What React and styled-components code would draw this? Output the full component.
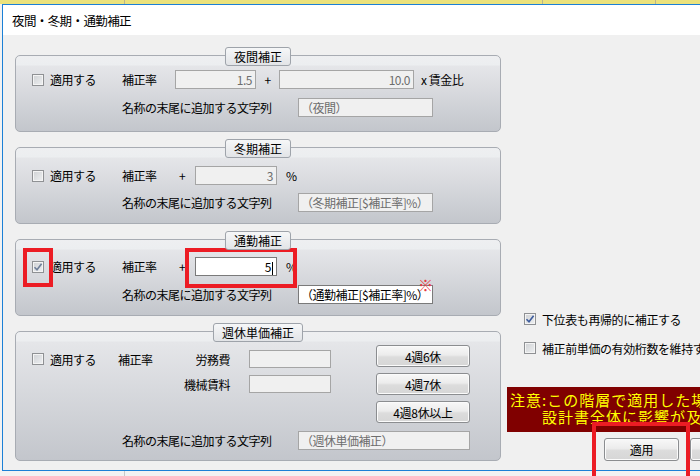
import React from 'react';
import styled, { createGlobalStyle } from 'styled-components';

const GlobalStyle = createGlobalStyle`
  body {
    margin: 0;
    font-family: "Noto Sans CJK JP", "Noto Sans", sans-serif;
    font-size: 12px;
    color: #000;
  }
`;

const Screen = styled.div`
  position: relative;
  width: 700px;
  height: 476px;
  overflow: hidden;
  background:
    linear-gradient(90deg, transparent 124px, #c9c9c9 124px, #c9c9c9 125px, transparent 125px),
    #f2f2f2;
`;

const SheetStrip = styled.div`
  height: 4px;
  background:
    linear-gradient(90deg, transparent 124px, #b9b58a 124px, #b9b58a 125px, transparent 125px,
      transparent 542px, #b9b58a 542px, #b9b58a 543px, transparent 543px,
      transparent 655px, #b9b58a 655px, #b9b58a 656px, transparent 656px),
    #ebe27c;
`;

const Window = styled.div`
  margin-left: 2px;
  width: 760px;
  height: 467px;
  box-sizing: border-box;
  border: 1px solid #1b80d6;
  border-right: none;
  display: flex;
  flex-direction: column;
  background: #f0f0f0;
`;

const TitleBar = styled.div`
  height: 30px;
  flex-shrink: 0;
  background: #fff;
  display: flex;
  align-items: center;
  padding-left: 9px;
  font-size: 12.5px;
  letter-spacing: -0.6px;
`;

const Body = styled.div`
  flex: 1;
  display: flex;
  padding: 12px 0 0 12px;
  background: #f0f0f0;
`;

const LeftCol = styled.div`
  width: 486px;
  flex-shrink: 0;
  letter-spacing: -0.5px;
`;

const Group = styled.div`
  position: relative;
  padding-top: 8px;
  & + & {
    margin-top: 7px;
  }
`;

const Legend = styled.div`
  position: absolute;
  top: 0;
  left: 50%;
  transform: translateX(-50%);
  height: 19px;
  box-sizing: border-box;
  padding: 0 8px;
  border: 1px solid #9ea3aa;
  border-radius: 3px;
  background: linear-gradient(#f6f7f8, #e2e4e7);
  display: flex;
  align-items: center;
  white-space: nowrap;
  letter-spacing: 0;
  z-index: 1;
`;

const Frame = styled.div`
  height: ${p => p.$h}px;
  box-sizing: border-box;
  border: 1px solid #a8acb3;
  border-radius: 5px;
  background: linear-gradient(#eeeff1 0, #eceef0 9px, #e5e6e9 10px, #c3c6cc 100%);
  padding: ${p => p.$top}px 0 0 16px;
  display: flex;
  flex-direction: column;
  gap: ${p => p.$gap || 9}px;
`;

const Row = styled.div`
  display: flex;
  align-items: center;
  height: 19px;
  padding-left: ${p => p.$indent || 0}px;
  white-space: nowrap;
`;

const CheckLabel = styled.label`
  display: flex;
  align-items: center;
  gap: 6px;
  width: ${p => p.$w || 90}px;
  flex-shrink: 0;
`;

const Box = styled.span`
  width: 12px;
  height: 12px;
  box-sizing: border-box;
  border: 1px solid #8f9194;
  background: linear-gradient(135deg, #cfd1d4, #eef0f2);
  box-shadow: inset 0 0 0 1px #f4f4f4;
  display: flex;
  align-items: center;
  justify-content: center;
  flex-shrink: 0;
`;

const Text = styled.span`
  width: ${p => (p.$w ? `${p.$w}px` : 'auto')};
  flex-shrink: 0;
  text-align: ${p => p.$align || 'left'};
  margin-left: ${p => p.$ml || 0}px;
`;

const Field = styled.div`
  position: relative;
  width: ${p => p.$w}px;
  height: ${p => p.$h || 19}px;
  box-sizing: border-box;
  flex-shrink: 0;
  border: 1px solid ${p => (p.$active ? '#7a7a7a' : '#a5a5a5')};
  background: ${p => (p.$active ? '#fff' : '#f0f0f0')};
  color: ${p => (p.$active ? '#000' : '#6d6d6d')};
  text-align: ${p => p.$align || 'left'};
  padding: 0 ${p => (p.$align === 'right' ? 3 : 2)}px;
  line-height: ${p => (p.$h || 19) - 2}px;
  white-space: nowrap;
`;

const Caret = styled.span`
  display: inline-block;
  width: 1px;
  height: 13px;
  background: #000;
  vertical-align: middle;
  margin-left: 1px;
`;

const Mark = styled.span`
  position: absolute;
  right: -1px;
  top: -9px;
  color: #e63a42;
  font-size: 15px;
  line-height: 15px;
  letter-spacing: 0;
`;

const TopSection = styled.div`
  display: flex;
  align-items: flex-start;
`;

const RateGrid = styled.div`
  display: grid;
  grid-template-columns: 86px 59px 72px 82px;
  grid-auto-rows: 18px;
  row-gap: 7px;
  align-items: center;
  margin-top: 5px;
  white-space: nowrap;
`;

const GridLabel = styled.span`
  grid-column: ${p => p.$col};
  text-align: ${p => p.$align || 'left'};
  padding-right: ${p => (p.$align === 'right' ? 19 : 0)}px;
`;

const ButtonStack = styled.div`
  display: flex;
  flex-direction: column;
  gap: 6px;
  margin-left: 45px;
`;

const Button = styled.button`
  width: ${p => p.$w || 94}px;
  height: ${p => p.$h || 22}px;
  box-sizing: border-box;
  flex-shrink: 0;
  border: 1px solid #8b8d90;
  border-radius: 3px;
  background: linear-gradient(#f8f8f8 0, #ececec 45%, #dcdcdc 55%, #d6d6d6 100%);
  box-shadow: inset 0 0 0 1px #fbfbfb;
  font-family: inherit;
  font-size: 12px;
  letter-spacing: -0.3px;
  color: #000;
  padding: 0;
`;

const RightCol = styled.div`
  margin-left: 6px;
  padding-top: 263px;
  display: flex;
  flex-direction: column;
  white-space: nowrap;
`;

const OptionRow = styled.label`
  display: flex;
  align-items: center;
  gap: 6px;
  height: 18px;
  padding-left: 17px;
  letter-spacing: -0.4px;
  & + & {
    margin-top: 11px;
  }
`;

const Warning = styled.div`
  margin-top: 30px;
  height: 45px;
  box-sizing: border-box;
  background: #800000;
  color: #ffff00;
  font-size: 15px;
  line-height: 17px;
  letter-spacing: 1px;
  padding: 4px 0 0 3px;
`;

const WarnLine = styled.div`
  padding-left: ${p => p.$indent || 0}px;
`;

const ButtonRow = styled.div`
  display: flex;
  gap: 11px;
  margin-top: 6px;
  padding-left: 97px;
`;

const Highlight = styled.div`
  position: absolute;
  left: ${p => p.$x}px;
  top: ${p => p.$y}px;
  width: ${p => p.$w}px;
  height: ${p => p.$h}px;
  box-sizing: border-box;
  border: 4px solid #ec1c24;
  pointer-events: none;
`;

const CheckMark = ({ color }) => (
  <svg width="10" height="10" viewBox="0 0 10 10">
    <path d="M1.5 5.2 L4 7.8 L8.6 1.8" fill="none" stroke={color} strokeWidth="1.6" />
  </svg>
);

const Checkbox = ({ checked, color = '#6f7f99' }) => (
  <Box>{checked && <CheckMark color={color} />}</Box>
);

const NameRow = ({ value, width = 135, active, mark }) => (
  <Row $indent={90}>
    <Text $w={176}>名称の末尾に追加する文字列</Text>
    <Field $w={width} $active={active}>
      {value}
      {mark && <Mark>※</Mark>}
    </Field>
  </Row>
);

export default function App() {
  return (
    <Screen>
      <GlobalStyle />
      <SheetStrip />
      <Window>
        <TitleBar>夜間・冬期・通勤補正</TitleBar>
        <Body>
          <LeftCol>
            <Group>
              <Legend>夜間補正</Legend>
              <Frame $h={77} $top={14} $gap={9}>
                <Row>
                  <CheckLabel><Checkbox />適用する</CheckLabel>
                  <Text $w={53}>補正率</Text>
                  <Field $w={81} $align="right">1.5</Field>
                  <Text $w={23} $align="center">+</Text>
                  <Field $w={135} $align="right">10.0</Field>
                  <Text $ml={7}>x 賃金比</Text>
                </Row>
                <NameRow value="（夜間）" />
              </Frame>
            </Group>

            <Group>
              <Legend>冬期補正</Legend>
              <Frame $h={77} $top={18} $gap={8}>
                <Row>
                  <CheckLabel><Checkbox />適用する</CheckLabel>
                  <Text $w={57}>補正率</Text>
                  <Text $w={16}>+</Text>
                  <Field $w={82} $align="right">3</Field>
                  <Text $ml={9}>%</Text>
                </Row>
                <NameRow value="（冬期補正[$補正率]%）" />
              </Frame>
            </Group>

            <Group>
              <Legend>通勤補正</Legend>
              <Frame $h={77} $top={17} $gap={9}>
                <Row>
                  <CheckLabel><Checkbox checked />適用する</CheckLabel>
                  <Text $w={57}>補正率</Text>
                  <Text $w={16}>+</Text>
                  <Field $w={82} $align="right" $active>5<Caret /></Field>
                  <Text $ml={9}>%</Text>
                </Row>
                <NameRow value="（通勤補正[$補正率]%）" active mark />
              </Frame>
            </Group>

            <Group>
              <Legend>週休単価補正</Legend>
              <Frame $h={130} $top={13} $gap={8}>
                <TopSection>
                  <RateGrid>
                    <CheckLabel><Checkbox />適用する</CheckLabel>
                    <GridLabel $col={2}>補正率</GridLabel>
                    <GridLabel $col={3} $align="right">労務費</GridLabel>
                    <Field $w={82} $h={18} />
                    <GridLabel $col={3} $align="right">機械賃料</GridLabel>
                    <Field $w={82} $h={18} />
                  </RateGrid>
                  <ButtonStack>
                    <Button>4週6休</Button>
                    <Button>4週7休</Button>
                    <Button>4週8休以上</Button>
                  </ButtonStack>
                </TopSection>
                <NameRow value="（週休単価補正）" width={172} />
              </Frame>
            </Group>
          </LeftCol>

          <RightCol>
            <OptionRow><Checkbox checked color="#3d5c9c" />下位表も再帰的に補正する</OptionRow>
            <OptionRow><Checkbox />補正前単価の有効桁数を維持する</OptionRow>
            <Warning>
              <WarnLine>注意:この階層で適用した場合は、</WarnLine>
              <WarnLine $indent={32}>設計書全体に影響が及びます。</WarnLine>
            </Warning>
            <ButtonRow>
              <Button $w={75} $h={23}>適用</Button>
              <Button $w={75} $h={23}>閉じる</Button>
            </ButtonRow>
          </RightCol>
        </Body>
      </Window>

      <Highlight $x={23} $y={248} $w={30} $h={39} />
      <Highlight $x={185} $y={248} $w={112} $h={40} />
      <Highlight $x={592} $y={422} $w={98} $h={60} />
    </Screen>
  );
}
